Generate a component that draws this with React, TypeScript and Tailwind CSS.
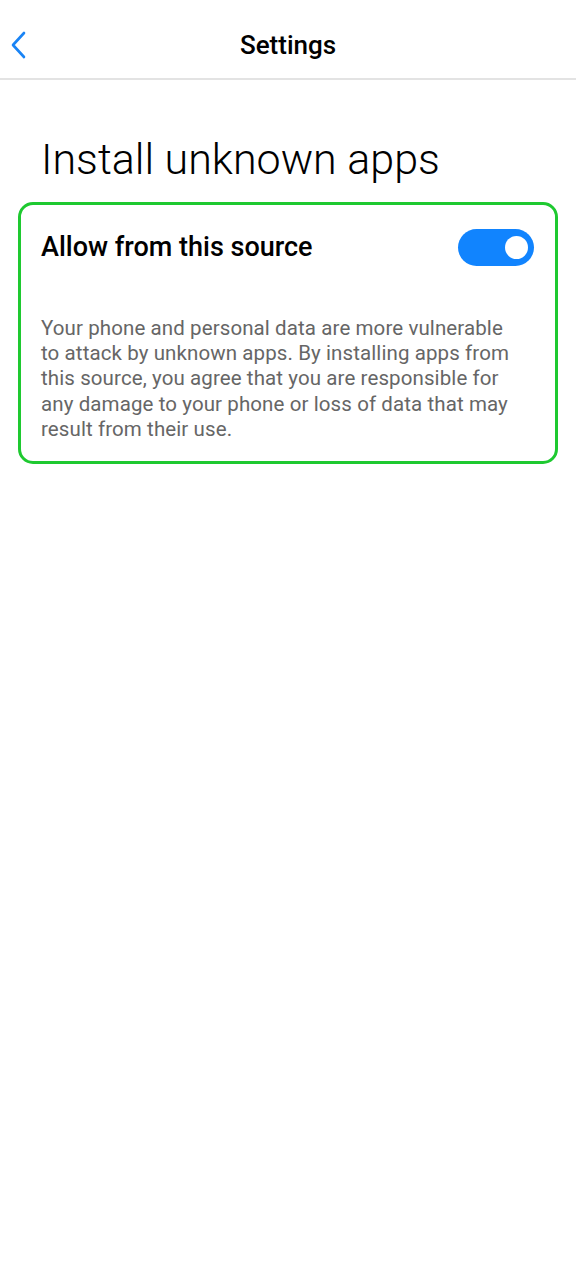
const warning = [
  "Your phone and personal data are more vulnerable",
  "to attack by unknown apps. By installing apps from",
  "this source, you agree that you are responsible for",
  "any damage to your phone or loss of data that may",
  "result from their use.",
];

export default function App() {
  return (
    <div className="min-h-[1280px] w-[576px] bg-white font-['Roboto',sans-serif]">
      <header className="relative flex h-[80px] items-center justify-center border-b-2 border-[#e3e3e3] pt-[13px]">
        <button className="absolute left-[8px] top-[28px] p-[2px]">
          <svg width="18" height="30" viewBox="0 0 18 30" fill="none">
            <path d="M14 3 L3 15 L14 27" stroke="#1a84f5" strokeWidth="2.6" strokeLinecap="round" strokeLinejoin="round" />
          </svg>
        </button>
        <h1 className="text-[26px] font-medium text-black">Settings</h1>
      </header>

      <div className="px-[18px] pt-[53px]">
        <h2 className="pl-[23px] text-[43px] font-light leading-[52px] text-black">Install unknown apps</h2>

        <section className="mt-[17px] rounded-[15px] border-[3px] border-[#1ec930] pb-[18px] pl-[20px] pr-[21px] pt-[22px]">
          <div className="flex items-center justify-between">
            <span className="text-[27px] font-medium text-black">Allow from this source</span>
            <div className="flex h-[37px] w-[76px] items-center justify-end rounded-full bg-[#1184fe] pr-[6px]">
              <div className="h-[23px] w-[23px] rounded-full bg-white" />
            </div>
          </div>
          <p className="mt-[48px] text-[20.5px] leading-[25.4px] tracking-[0.1px] text-[#666666]">
            {warning.map((line) => (
              <span key={line} className="block whitespace-nowrap">
                {line}
              </span>
            ))}
          </p>
        </section>
      </div>
    </div>
  );
}
